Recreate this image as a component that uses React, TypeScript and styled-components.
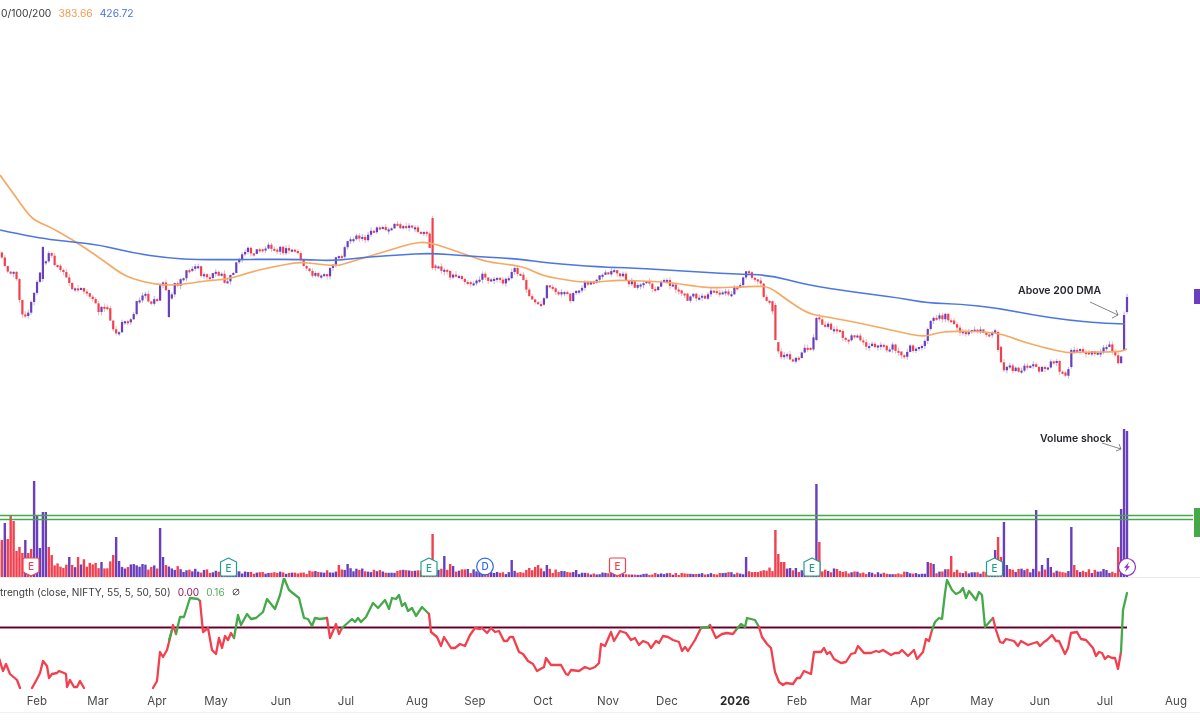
import styled, { createGlobalStyle } from 'styled-components';

const UP = '#6a3fbd';
const DOWN = '#f2404f';
const GREEN = '#45a94a';
const ORANGE = '#f5a963';
const BLUE = '#4c76e4';

const GlobalStyle = createGlobalStyle`
  html, body {
    margin: 0;
    background: #fff;
    font-family: Inter, "Liberation Sans", sans-serif;
  }
`;

const Page = styled.div`
  width: 1200px;
  height: 725px;
  overflow: hidden;
  display: flex;
  flex-direction: column;
  background: #fff;
  filter: blur(0.3px);
`;

const PricePane = styled.section`
  position: relative;
  height: 577px;
  flex: none;
  border-bottom: 1px solid #ececec;
`;

const StrengthPane = styled.section`
  position: relative;
  height: 112px;
  flex: none;
`;

const Chart = styled.svg`
  display: block;
`;

const Legend = styled.div<{ $top: number; $left: number; $size: number }>`
  position: absolute;
  top: ${(p) => p.$top}px;
  left: ${(p) => p.$left}px;
  display: flex;
  align-items: center;
  gap: 7px;
  font-size: ${(p) => p.$size}px;
  line-height: 14px;
  color: #3b3b3b;
  white-space: nowrap;
`;

const LegendValue = styled.span<{ $color: string }>`
  color: ${(p) => p.$color};
`;

const TimeAxis = styled.div`
  display: flex;
  height: 23px;
  flex: none;
  padding-top: 3px;
  box-sizing: border-box;
  border-bottom: 1px solid #f1f1f1;
`;

const Tick = styled.span<{ $gap: number; $bold?: boolean }>`
  flex: 0 0 40px;
  margin-left: ${(p) => p.$gap}px;
  text-align: center;
  font-size: 11.5px;
  line-height: 16px;
  letter-spacing: 0.1px;
  color: ${(p) => (p.$bold ? '#2a2a2a' : '#4a4a4a')};
  font-weight: ${(p) => (p.$bold ? 700 : 400)};
`;

const Note = styled.text`
  font-family: Inter, "Liberation Sans", sans-serif;
  font-size: 10.5px;
  font-weight: 600;
  fill: #26262c;
`;

const MarkerLetter = styled.text<{ $color: string }>`
  font-family: Inter, "Liberation Sans", sans-serif;
  font-size: 10px;
  font-weight: 500;
  text-anchor: middle;
  fill: ${(p) => p.$color};
`;

type Pt = number[];

const closes: Pt[] = [
  [-3, 250], [0, 255], [8, 270], [14, 273], [18, 287], [22, 313], [28, 315], [34, 293], [43, 263], [50, 253], [56, 268],
  [63, 273], [68, 283], [75, 288], [82, 290], [90, 296], [98, 310], [107, 307], [113, 327], [117, 333], [122, 324],
  [128, 323], [133, 313], [138, 300], [143, 295], [150, 300], [158, 303], [160, 287], [165, 283], [170, 303], [173, 287],
  [180, 280], [187, 270], [197, 265], [203, 278], [212, 275], [218, 273], [225, 280], [232, 277], [238, 257], [247, 250],
  [253, 253], [265, 248], [270, 245], [283, 251], [295, 250], [300, 257], [305, 268], [310, 275], [320, 273], [327, 277],
  [333, 265], [337, 255], [343, 255], [348, 238], [358, 237], [363, 238], [368, 235], [383, 228], [387, 232], [395, 223],
  [400, 227], [405, 230], [412, 227], [417, 233], [422, 230], [428, 235], [432, 262], [435, 267], [440, 270], [445, 268],
  [452, 278], [463, 277], [468, 283], [475, 280], [483, 277], [492, 281], [503, 280], [510, 278], [513, 268], [517, 272],
  [523, 280], [530, 297], [537, 308], [543, 305], [547, 288], [557, 292], [563, 293], [570, 299], [575, 290], [583, 285],
  [593, 282], [600, 278], [613, 272], [623, 277], [630, 283], [640, 287], [645, 282], [652, 290], [657, 289], [663, 283],
  [668, 280], [673, 287], [682, 293], [688, 302], [695, 295], [705, 298], [710, 293], [717, 290], [732, 292], [738, 287],
  [747, 273], [752, 275], [760, 283], [763, 292], [767, 302], [772, 307], [775, 340], [778, 353], [785, 357], [792, 358],
  [798, 362], [803, 347], [808, 348], [812, 353], [815, 320], [818, 318], [823, 323], [830, 327], [837, 328], [842, 337],
  [848, 338], [858, 335], [863, 342], [875, 347], [880, 343], [887, 350], [895, 347], [900, 352], [905, 358], [910, 348],
  [917, 352], [923, 347], [926, 333], [929, 325], [933, 315], [942, 318], [945, 313], [952, 323], [957, 330], [967, 333],
  [980, 332], [990, 332], [995, 327], [998, 345], [1001, 360], [1003, 368], [1008, 363], [1015, 370], [1020, 372],
  [1025, 365], [1033, 365], [1040, 370], [1047, 368], [1052, 357], [1057, 365], [1063, 373], [1066, 378], [1068, 372],
  [1071, 350], [1083, 350], [1092, 355], [1102, 350], [1110, 347], [1113, 350], [1117, 365], [1121, 357], [1124, 316],
  [1127, 297],
];

const ma50: Pt[] = [
  [0, 175], [13, 193], [30, 217], [40, 223], [50, 227], [73, 240], [100, 258], [120, 273], [133, 279], [157, 285],
  [180, 285], [203, 281], [230, 279], [250, 272], [277, 266], [300, 262], [317, 264], [337, 266], [347, 263], [367, 257],
  [390, 250], [413, 243], [428, 242], [447, 248], [467, 255], [487, 262], [513, 265], [527, 268], [543, 276], [567, 280],
  [580, 282], [600, 282], [617, 280], [640, 281], [667, 282], [700, 287], [717, 288], [757, 286], [770, 287], [787, 300],
  [807, 313], [820, 316], [850, 321], [900, 332], [923, 337], [937, 333], [950, 331], [997, 332], [1023, 342], [1050, 349],
  [1068, 353], [1077, 352], [1120, 352], [1127, 349],
];

const ma200: Pt[] = [
  [0, 230], [37, 238], [73, 242], [100, 245], [133, 253], [167, 258], [200, 260], [300, 259], [333, 261], [367, 257],
  [400, 255], [430, 253], [467, 256], [520, 259], [547, 263], [600, 267], [633, 268], [683, 271], [733, 274], [770, 275],
  [807, 285], [853, 292], [900, 298], [927, 303], [960, 304], [997, 308], [1033, 315], [1067, 320], [1100, 323], [1125, 324],
];

const volumeEnvelope: Pt[] = [
  [0, 36], [30, 30], [55, 14], [100, 13], [130, 10], [158, 10], [170, 9], [190, 7], [220, 5], [260, 4], [300, 4], [340, 7],
  [355, 7], [380, 6], [420, 5], [445, 8], [470, 6], [500, 4], [525, 6], [545, 7], [570, 4], [620, 3], [700, 3], [745, 4],
  [760, 7], [790, 7], [815, 5], [830, 7], [860, 4], [925, 4], [945, 6], [985, 4], [1010, 7], [1040, 6], [1115, 6],
];

// x, height, colour of the volume bars that stand out
const volumeSpikes: [number, number, string][] = [
  [1, 50, DOWN], [3, 37, DOWN], [6, 54, UP], [9, 38, DOWN], [12, 61, DOWN], [15, 56, DOWN], [18, 30, DOWN], [21, 24, DOWN],
  [24, 37, UP], [27, 24, DOWN], [30, 28, DOWN], [33.5, 96, UP], [36, 62, UP], [39, 29, UP], [42, 65, UP], [45, 65, UP],
  [49, 30, DOWN], [52, 22, DOWN], [70, 20, UP], [77, 20, DOWN], [102, 15, UP], [113, 22, DOWN], [116, 40, UP], [119, 16, UP],
  [160, 49, UP], [163, 20, UP], [339, 12, DOWN], [348, 13, UP], [432, 43, DOWN], [444, 21, UP], [450, 13, DOWN],
  [453, 11, UP], [468, 8, UP], [512, 17, UP], [530, 9, DOWN], [535, 10, DOWN], [539, 12, DOWN], [546, 12, UP], [577, 7, UP],
  [747, 20, UP], [775, 47, DOWN], [778, 23, DOWN], [782, 15, DOWN], [784, 15, DOWN], [790, 9, UP], [797, 9, UP],
  [815, 93, UP], [818, 35, DOWN], [927, 15, UP], [930, 14, DOWN], [933, 13, UP], [950, 21, DOWN], [994, 27, UP],
  [997, 40, DOWN], [1000, 20, DOWN], [1003, 55, UP], [1006, 12, UP], [1010, 8, DOWN], [1037, 67, UP], [1043, 12, UP],
  [1049, 19, UP], [1052, 10, UP], [1071, 50, UP], [1074, 12, DOWN], [1117, 30, DOWN], [1120, 68, UP], [1124, 148, UP],
  [1127, 146, UP],
];

// candles that are too long to come out of the close curve
const bigCandles: [number, number, number, string][] = [
  [43, 247, 279, UP], [170, 290, 317, UP], [432, 218, 268, DOWN], [775, 305, 340, DOWN], [815, 318, 340, UP],
  [998, 332, 350, DOWN], [1071, 350, 367, UP], [1124, 315, 350, UP], [1127, 297, 312, UP],
];

const strength: { color: string; pts: Pt[] }[] = [
  { color: DOWN, pts: [[-1, 658], [3, 671], [6, 664], [10, 674], [17, 680], [20, 688]] },
  {
    color: DOWN,
    pts: [[32, 688], [37, 679], [40, 673], [43, 661], [47, 666], [49, 678], [52, 674], [57, 673], [59, 671], [64, 673], [66, 674],
      [67, 687], [70, 680], [74, 687], [77, 687], [80, 681], [84, 688]],
  },
  {
    color: DOWN,
    pts: [[153, 688], [157, 681], [160, 652], [163, 657], [167, 650], [170, 638], [173, 625], [176, 634]],
  },
  { color: GREEN, pts: [[169, 640], [172, 630]] },
  {
    color: GREEN,
    pts: [[176, 634], [180, 617], [184, 617], [190, 598], [198, 599], [200, 601]],
  },
  {
    color: DOWN,
    pts: [[200, 601], [203, 632], [208, 628], [212, 650], [216, 654], [219, 638], [222, 648], [225, 636], [228, 640], [231, 633],
      [234, 638]],
  },
  {
    color: GREEN,
    pts: [[234, 638], [238, 615], [241, 625], [247, 614], [251, 619], [256, 618], [263, 612], [267, 599], [275, 609], [280, 595],
      [284, 578], [289, 590], [299, 598], [304, 618], [308, 619], [312, 626], [315, 618], [320, 619], [327, 618]],
  },
  { color: DOWN, pts: [[327, 618], [330, 638], [336, 624], [339, 634], [342, 628]] },
  {
    color: GREEN,
    pts: [[342, 628], [352, 619], [355, 622], [358, 618], [361, 622], [366, 617], [373, 603], [378, 608], [385, 600], [389, 609],
      [392, 598], [396, 599], [399, 595], [402, 606], [405, 603], [408, 611], [412, 608], [416, 616], [422, 607], [429, 614]],
  },
  {
    color: DOWN,
    pts: [[429, 614], [431, 632], [437, 637], [441, 646], [444, 637], [451, 648], [455, 648], [460, 644], [465, 646], [470, 635],
      [475, 628], [480, 629], [482, 628], [487, 633], [491, 628], [495, 632], [499, 631], [504, 641], [507, 641], [510, 637],
      [513, 637], [519, 652], [523, 654], [528, 661], [533, 664], [537, 671], [544, 667], [546, 658], [551, 665], [561, 665],
      [566, 674], [568, 675], [571, 670], [579, 671], [585, 667], [590, 669], [595, 667], [599, 663], [601, 644], [605, 646],
      [611, 632], [614, 641], [620, 631], [626, 633], [631, 640], [635, 638], [639, 645], [643, 641], [648, 643], [651, 648],
      [656, 641], [659, 643], [663, 636], [668, 637], [673, 640], [679, 642], [682, 651], [685, 647], [688, 651], [695, 640],
      [701, 628]],
  },
  { color: GREEN, pts: [[701, 628], [708, 627], [710, 625]] },
  { color: DOWN, pts: [[710, 625], [716, 638], [722, 634], [727, 633], [733, 634], [736, 630]] },
  { color: GREEN, pts: [[736, 630], [741, 624], [745, 627], [747, 618], [755, 620], [759, 627]] },
  {
    color: DOWN,
    pts: [[759, 627], [762, 637], [767, 644], [771, 648], [775, 672], [779, 682], [783, 685], [786, 683], [793, 684], [797, 678],
      [800, 678], [804, 671], [811, 674], [814, 652], [821, 652], [824, 648], [827, 654], [830, 652], [834, 659], [841, 663],
      [846, 662], [851, 654], [855, 653], [858, 646], [864, 653], [871, 653], [876, 651], [879, 652], [883, 650], [891, 655],
      [895, 653], [899, 653], [902, 650], [908, 656], [914, 650], [917, 659], [923, 652], [926, 639], [929, 641], [932, 630]],
  },
  {
    color: GREEN,
    pts: [[932, 630], [935, 622], [939, 618], [942, 619], [945, 593], [947, 580], [952, 590], [956, 594], [960, 592], [963, 588],
      [966, 598], [969, 591], [976, 600], [979, 592], [982, 595], [985, 627], [993, 618]],
  },
  {
    color: DOWN,
    pts: [[993, 618], [996, 630], [1000, 642], [1003, 643], [1006, 639], [1014, 641], [1018, 646], [1021, 641], [1028, 645], [1037, 642],
      [1040, 646], [1044, 642], [1047, 640], [1052, 635], [1056, 641], [1059, 641], [1065, 654], [1068, 648], [1071, 633], [1077, 632],
      [1081, 639], [1086, 640], [1093, 648], [1096, 656], [1099, 652], [1102, 653], [1105, 659], [1108, 656], [1112, 658], [1115, 658],
      [1118, 669], [1121, 652]],
  },
  { color: GREEN, pts: [[1121, 652], [1123, 610], [1127, 593]] },
];

const months: [string, number, boolean?][] = [
  ['Feb', 37], ['Mar', 98], ['Apr', 157], ['May', 216], ['Jun', 281], ['Jul', 346], ['Aug', 417], ['Sep', 475], ['Oct', 543],
  ['Nov', 608], ['Dec', 667], ['2026', 735, true], ['Feb', 797], ['Mar', 861], ['Apr', 920], ['May', 982], ['Jun', 1040],
  ['Jul', 1105], ['Aug', 1176],
];

const path = (pts: Pt[]) => pts.map((p, i) => `${i ? 'L' : 'M'}${p[0]} ${p[1]}`).join('');

// rounded line through the midpoints, for the moving averages
const smooth = (pts: Pt[]) => {
  let d = `M${pts[0][0]} ${pts[0][1]}`;
  for (let i = 1; i < pts.length - 1; i++) {
    const mx = (pts[i][0] + pts[i + 1][0]) / 2;
    const my = (pts[i][1] + pts[i + 1][1]) / 2;
    d += `Q${pts[i][0]} ${pts[i][1]} ${mx} ${my}`;
  }
  const last = pts[pts.length - 1];
  return `${d}L${last[0]} ${last[1]}`;
};

const lerp = (pts: Pt[], x: number) => {
  if (x <= pts[0][0]) return pts[0][1];
  for (let i = 1; i < pts.length; i++) {
    if (x <= pts[i][0]) {
      const [x0, y0] = pts[i - 1];
      const [x1, y1] = pts[i];
      return y0 + ((y1 - y0) * (x - x0)) / (x1 - x0);
    }
  }
  return pts[pts.length - 1][1];
};

const noise = (i: number) => {
  const v = Math.sin(i * 12.9898 + 4.1) * 43758.5453;
  return v - Math.floor(v);
};

const STEP = 2.93;
const BARS = 386;

const nearest = (list: number[], x: number) => list.findIndex((v) => Math.abs(v - x) <= STEP / 2);

const candles = (() => {
  let prev = lerp(closes, 1127 - BARS * STEP);
  return Array.from({ length: BARS }, (_, n) => {
    const x = 1127 - (BARS - 1 - n) * STEP;
    const close = lerp(closes, x) + (noise(n) - 0.5) * 7;
    let top = Math.min(prev, close);
    let bottom = Math.max(prev, close);
    let color = close < prev ? UP : DOWN;
    const big = bigCandles.find((c) => Math.abs(c[0] - x) <= STEP / 2);
    if (big) {
      top = big[1];
      bottom = big[2];
      color = big[3];
    }
    prev = close;
    const end = Math.max(bottom, top + 2);
    return {
      x,
      top,
      bottom: end,
      high: top - noise(n + 500) * 3.5,
      low: end + noise(n + 900) * 3.5,
      color,
    };
  });
})();

const barXs = candles.map((c) => c.x);
const spikeAt = new Map(volumeSpikes.map((s) => [nearest(barXs, s[0]), s]));

const Candles = () => (
  <g>
    {candles.map((c) => (
      <g key={c.x} fill={c.color} stroke={c.color}>
        <line x1={c.x} x2={c.x} y1={c.high} y2={c.low} strokeWidth={0.8} opacity={0.5} />
        <rect x={c.x - 1.1} y={c.top} width={2.2} height={c.bottom - c.top} stroke="none" />
      </g>
    ))}
  </g>
);

const Volume = () => (
  <g>
    {candles.map((c, n) => {
      const spike = spikeAt.get(n);
      const h = spike ? spike[1] : Math.max(2, lerp(volumeEnvelope, c.x) * (0.65 + noise(n + 200) * 0.7));
      return <rect key={c.x} x={c.x - 1.2} y={577 - h} width={2.4} height={h} fill={spike ? spike[2] : c.color} />;
    })}
  </g>
);

const EarningsMarker = ({ x, color, down }: { x: number; color: string; down?: boolean }) => (
  <g transform={`translate(${x} 567)`}>
    <path
      d={
        down
          ? 'M-6.5 -9H6.5Q8 -9 8 -7.5V5L0 9L-8 5V-7.5Q-8 -9 -6.5 -9Z'
          : 'M0 -9L8 -5V7.5Q8 9 6.5 9H-6.5Q-8 9 -8 7.5V-5Z'
      }
      fill="#fff"
      stroke={color}
      strokeWidth={1.2}
      strokeLinejoin="round"
    />
    <MarkerLetter $color={color} y={down ? 3 : 4.5}>
      E
    </MarkerLetter>
  </g>
);

const DividendMarker = ({ x }: { x: number }) => (
  <g transform={`translate(${x} 566.5)`}>
    <circle r={8.3} fill="#fff" stroke="#2f66e8" strokeWidth={1.2} />
    <MarkerLetter $color="#2f66e8" y={3.7}>
      D
    </MarkerLetter>
  </g>
);

const ShockMarker = ({ x }: { x: number }) => (
  <g transform={`translate(${x} 567)`}>
    <circle r={8.5} fill="#fff" stroke="#8a2fc9" strokeWidth={1.2} />
    <path d="M2 -5L-3 0.8H-0.4L-2 5L3 -0.8H0.4Z" fill="#8a2fc9" />
  </g>
);

const Arrow = ({ d }: { d: string }) => <path d={d} fill="none" stroke="#666" strokeWidth={0.8} />;

const TICK = 40;

export default function App() {
  return (
    <Page>
      <GlobalStyle />
      <PricePane>
        <Legend $top={6} $left={1} $size={10.3}>
          <span>0/100/200</span>
          <LegendValue $color="#f29a4f">383.66</LegendValue>
          <LegendValue $color="#4a72e0">426.72</LegendValue>
        </Legend>
        <Chart width={1200} height={577} viewBox="0 0 1200 577">
          <Volume />
          <line x1={0} x2={1193} y1={515.5} y2={515.5} stroke={GREEN} strokeWidth={1.4} />
          <line x1={0} x2={1193} y1={519.5} y2={519.5} stroke={GREEN} strokeWidth={1.4} />
          <Candles />
          <path d={smooth(ma50)} fill="none" stroke={ORANGE} strokeWidth={1.7} />
          <path d={smooth(ma200)} fill="none" stroke={BLUE} strokeWidth={1.7} />
          <rect x={1194} y={289} width={6} height={15} fill={UP} />
          <rect x={1194} y={508} width={6} height={29} fill={GREEN} />
          <EarningsMarker x={31} color={DOWN} down />
          <EarningsMarker x={228.5} color="#1f9e8f" />
          <EarningsMarker x={429} color="#1f9e8f" />
          <DividendMarker x={485} />
          <EarningsMarker x={617.5} color={DOWN} down />
          <EarningsMarker x={812} color="#1f9e8f" />
          <EarningsMarker x={994.5} color="#1f9e8f" />
          <ShockMarker x={1127} />
          <Note x={1018} y={294}>
            Above 200 DMA
          </Note>
          <Arrow d="M1090 302L1118 315M1112 318L1118 315L1116 310" />
          <Note x={1040} y={442}>
            Volume shock
          </Note>
          <Arrow d="M1102 443L1121 449M1116 451L1121 449L1119 444" />
        </Chart>
      </PricePane>
      <StrengthPane>
        <Legend $top={7} $left={0} $size={10.1}>
          <span>trength (close, NIFTY, 55, 5, 50, 50)</span>
          <LegendValue $color="#98185f">0.00</LegendValue>
          <LegendValue $color="#5aae5e">0.16</LegendValue>
          <svg width={8} height={8} viewBox="0 0 8 8" fill="none" stroke="#555" strokeWidth={0.9}>
            <circle cx={4} cy={4} r={3} />
            <path d="M1 7L7 1" />
          </svg>
        </Legend>
        <Chart width={1200} height={112} viewBox="0 578 1200 112">
          <line x1={0} x2={1127} y1={627.5} y2={627.5} stroke="#e884ac" strokeWidth={2.6} />
          <line x1={0} x2={1127} y1={627.5} y2={627.5} stroke="#4a0a28" strokeWidth={1.3} />
          {strength.map((s) => (
            <path
              key={`${s.pts[0][0]}-${s.color}`}
              d={path(s.pts)}
              fill="none"
              stroke={s.color}
              strokeWidth={2.3}
              strokeLinejoin="round"
              strokeLinecap="round"
            />
          ))}
        </Chart>
      </StrengthPane>
      <TimeAxis>
        {months.map((m, i) => (
          <Tick key={`${m[0]}${m[1]}`} $gap={i === 0 ? m[1] - TICK / 2 : m[1] - months[i - 1][1] - TICK} $bold={m[2]}>
            {m[0]}
          </Tick>
        ))}
      </TimeAxis>
    </Page>
  );
}
